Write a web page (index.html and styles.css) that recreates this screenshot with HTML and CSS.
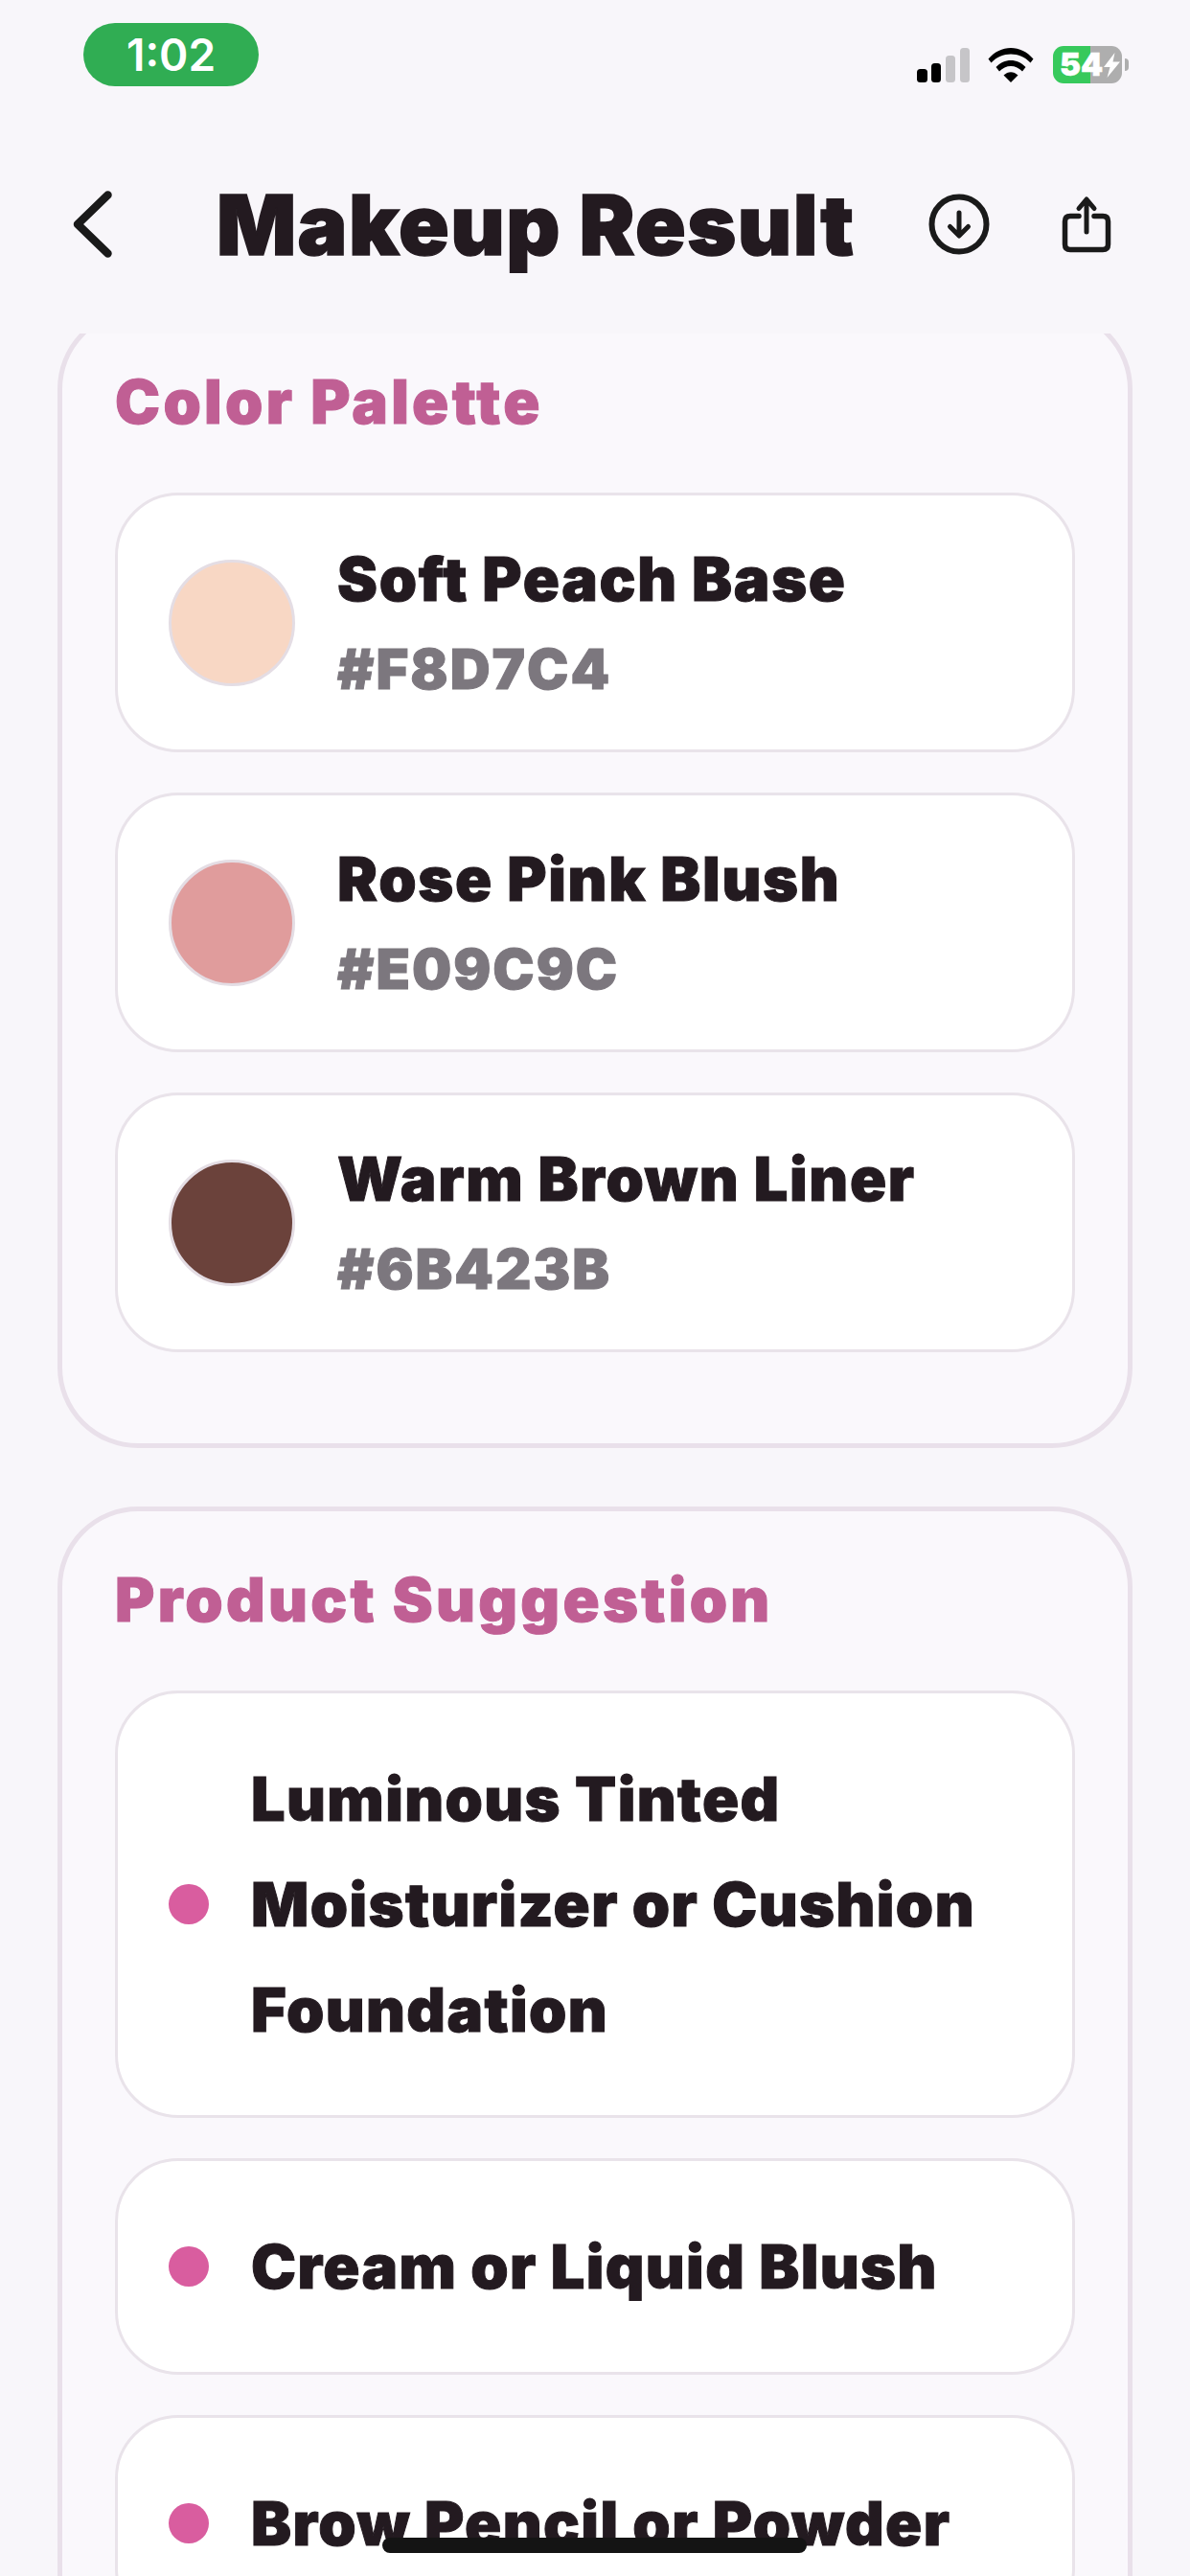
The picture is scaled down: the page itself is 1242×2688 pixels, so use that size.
FILE: index.html
```html
<!DOCTYPE html>
<html lang="en">
<head>
<meta charset="utf-8">
<title>Makeup Result</title>
<link rel="stylesheet" href="styles.css">
</head>
<body>
<div class="app">
  <header class="top">
    <div class="status">
      <div class="time">1:02</div>
      <div class="status-icons">
        <svg class="signal" width="55" height="36" viewBox="0 0 55 36">
          <rect x="0" y="22" width="11" height="14" rx="3.5" fill="#000"/>
          <rect x="15" y="16" width="10" height="20" rx="3.5" fill="#000"/>
          <rect x="30" y="8" width="10" height="28" rx="3.5" fill="#c6c5c8"/>
          <rect x="45" y="0" width="10" height="36" rx="3.5" fill="#c6c5c8"/>
        </svg>
        <svg class="wifi" width="48" height="37" viewBox="0 0 48 37">
          <path d="M0.5 12.5 C13 -3 35 -3 47.500 12.500 L44.500 16.500 C33.500 4.500 14.500 4.500 3.500 16.500 Z" fill="#000"/>
          <path d="M8.500 21 C17 11.500 31 11.500 39.500 21 L36 25.500 C29.500 18 18.500 18 12 25.500 Z" fill="#000"/>
          <path d="M16.500 29.500 C21 25 27 25 31.500 29.500 L24 37 Z" fill="#000"/>
        </svg>
        <div class="battery">
          <span class="battery-pct">54</span>
          <svg class="bolt" width="17" height="26" viewBox="0 0 17 26">
            <path d="M11.500 0 L0 15 H6.500 L3.500 26 L17 9.500 H9.500 Z" fill="#fff"/>
          </svg>
        </div>
      </div>
    </div>
    <nav class="nav">
      <svg class="back" width="56" height="80" viewBox="0 0 56 80">
        <path d="M42.500 9.500 L11 40 L42.500 70.500" fill="none" stroke="#1a1a1a" stroke-width="8.500" stroke-linecap="round" stroke-linejoin="round"/>
      </svg>
      <h1 class="title">Makeup Result</h1>
      <div class="actions">
        <svg class="download" width="72" height="72" viewBox="0 0 72 72">
          <circle cx="36" cy="36" r="28.500" fill="none" stroke="#1a1a1a" stroke-width="6"/>
          <path d="M36 24 V47 M26.500 38.500 L36 48 L45.500 38.500" fill="none" stroke="#1a1a1a" stroke-width="5" stroke-linecap="round" stroke-linejoin="round"/>
        </svg>
        <svg class="share" width="56" height="72" viewBox="0 0 56 72">
          <path d="M20 27.500 H11 Q5.500 27.500 5.500 33 V57 Q5.500 62.500 11 62.500 H45 Q50.500 62.500 50.500 57 V33 Q50.500 27.500 45 27.500 H36" fill="none" stroke="#1a1a1a" stroke-width="5.500" stroke-linecap="round"/>
          <path d="M28 10.500 V44 M20 19.500 L28 10 L36 19.500" fill="none" stroke="#1a1a1a" stroke-width="5" stroke-linecap="round" stroke-linejoin="round"/>
        </svg>
      </div>
    </nav>
  </header>
  <main class="scroll">
    <section class="panel">
      <h2 class="panel-title">Color Palette</h2>
      <div class="row">
        <span class="swatch swatch-peach"></span>
        <div class="color-text">
          <div class="name">Soft Peach Base</div>
          <div class="hex">#F8D7C4</div>
        </div>
      </div>
      <div class="row">
        <span class="swatch swatch-rose"></span>
        <div class="color-text">
          <div class="name">Rose Pink Blush</div>
          <div class="hex">#E09C9C</div>
        </div>
      </div>
      <div class="row">
        <span class="swatch swatch-brown"></span>
        <div class="color-text">
          <div class="name">Warm Brown Liner</div>
          <div class="hex">#6B423B</div>
        </div>
      </div>
    </section>
    <section class="panel">
      <h2 class="panel-title">Product Suggestion</h2>
      <div class="row product">
        <span class="dot"></span>
        <div class="product-name">Luminous Tinted Moisturizer or Cushion Foundation</div>
      </div>
      <div class="row product">
        <span class="dot"></span>
        <div class="product-name">Cream or Liquid Blush</div>
      </div>
      <div class="row product">
        <span class="dot"></span>
        <div class="product-name">Brow Pencil or Powder</div>
      </div>
    </section>
  </main>
  <div class="home-bar"></div>
</div>
</body>
</html>
```
FILE: styles.css
```css
* { box-sizing: border-box; }
html, body { margin: 0; padding: 0; }
body {
  width: 1242px;
  height: 2688px;
  overflow: hidden;
  background: #f8f6fa;
  font-family: Inter, "Noto Sans", sans-serif;
  color: #231a20;
}
.app {
  position: relative;
  display: flex;
  flex-direction: column;
  width: 1242px;
  height: 2688px;
  overflow: hidden;
}
.top {
  flex: 0 0 348px;
  display: flex;
  flex-direction: column;
  background: #f8f6fa;
}
.status {
  display: flex;
  align-items: flex-start;
  justify-content: space-between;
  height: 194px;
  padding: 24px 71px 0 87px;
}
.time {
  display: flex;
  align-items: center;
  justify-content: center;
  width: 183px;
  height: 66px;
  border-radius: 33px;
  background: #30ad53;
  color: #fff;
  font-size: 46px;
  font-weight: 600;
}
.status-icons {
  display: flex;
  align-items: flex-start;
}
.signal { margin-top: 26px; margin-right: 19px; }
.wifi { margin-top: 25px; margin-right: 20px; }
.battery {
  position: relative;
  display: flex;
  align-items: center;
  width: 72px;
  height: 39px;
  margin-top: 24px;
  padding-left: 7px;
  border-radius: 11px;
  background: linear-gradient(to right, #37c95c 0 39px, #aeaeae 39px);
  color: #fff;
  font-size: 33px;
  font-weight: 900;
  -webkit-text-stroke: 0.5px currentColor;
}
.battery::after {
  content: "";
  position: absolute;
  right: -7px;
  top: 13px;
  width: 4px;
  height: 13px;
  border-radius: 0 4px 4px 0;
  background: #aeaeae;
}
.battery-pct { line-height: 39px; }
.bolt { flex: none; margin-left: 1px; }
.nav {
  display: flex;
  align-items: center;
  height: 80px;
  padding: 0 80px 0 70px;
}
.back { margin-right: 100px; flex: none; }
.title {
  margin: 0;
  font-size: 87px;
  font-weight: 900;
  letter-spacing: 1.4px;
  -webkit-text-stroke: 1.5px currentColor;
  white-space: nowrap;
}
.actions {
  display: flex;
  align-items: center;
  gap: 69px;
  margin-left: auto;
}
.scroll {
  flex: 1;
  min-height: 0;
  overflow: hidden;
  padding: 0 60px;
}
.panel {
  margin-bottom: 61px;
  padding: 55px 55px 53px;
  background: #faf8fc;
  border: 5px solid #e9e0ea;
  border-radius: 84px;
}
.panel:first-child { margin-top: -26px; }
.panel-title {
  margin: 0 0 58px;
  height: 74px;
  line-height: 74px;
  font-size: 63px;
  font-weight: 900;
  letter-spacing: 3.3px;
  -webkit-text-stroke: 1px currentColor;
  color: #c05f94;
  white-space: nowrap;
}
.row {
  display: flex;
  align-items: center;
  gap: 44px;
  height: 271px;
  margin-bottom: 42px;
  padding: 0 53px;
  background: #fff;
  border: 3px solid #e9e3ea;
  border-radius: 66px;
}
.product { height: auto; padding: 55px 53px; }
.swatch {
  flex: none;
  width: 132px;
  height: 132px;
  border-radius: 50%;
  border: 3px solid #e4dde4;
}
.swatch-peach { background: #f8d7c4; }
.swatch-rose { background: #e09c9c; }
.swatch-brown { background: #6b423b; }
.color-text {
  display: flex;
  flex-direction: column;
  padding-bottom: 13px;
}
.name {
  height: 110px;
  line-height: 110px;
  font-size: 63px;
  font-weight: 900;
  letter-spacing: 1.7px;
  -webkit-text-stroke: 1px currentColor;
  white-space: nowrap;
}
.hex {
  height: 78px;
  line-height: 78px;
  font-size: 58px;
  font-weight: 900;
  letter-spacing: 2px;
  -webkit-text-stroke: 1px currentColor;
  color: #7c777e;
}
.dot {
  flex: none;
  width: 42px;
  height: 42px;
  border-radius: 50%;
  background: #d95d9f;
}
.product-name {
  flex: 1;
  line-height: 110px;
  font-size: 63px;
  font-weight: 900;
  letter-spacing: 1.4px;
  -webkit-text-stroke: 1px currentColor;
}
.home-bar {
  position: absolute;
  left: 399px;
  top: 2648px;
  width: 443px;
  height: 16px;
  border-radius: 8px;
  background: #141414;
}
```
